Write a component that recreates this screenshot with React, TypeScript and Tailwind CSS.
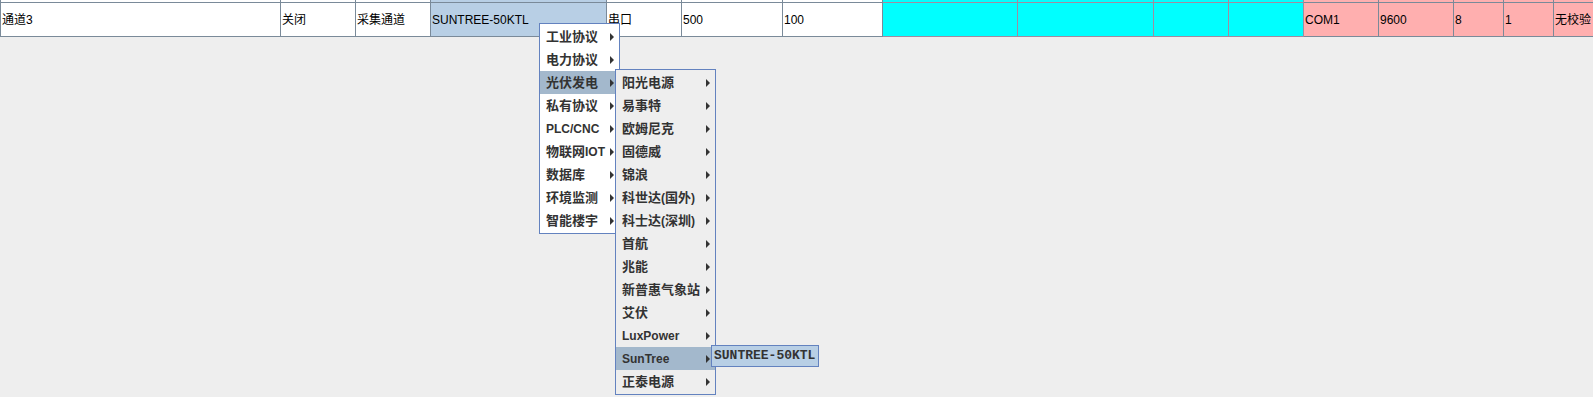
import React from "react";

type Cell = { w: number; text?: string; bg: string; line: string; first?: boolean };

const WHITE = "bg-white";
const SEL = "bg-[#b8cfe5]";
const CYAN = "bg-[#00ffff]";
const PINK = "bg-[#ffafaf]";

const cells: Cell[] = [
  { w: 281, text: "通道3", bg: WHITE, line: "border-[#7a8a99]", first: true },
  { w: 75, text: "关闭", bg: WHITE, line: "border-[#7a8a99]" },
  { w: 75, text: "采集通道", bg: WHITE, line: "border-[#7a8a99]" },
  { w: 176, text: "SUNTREE-50KTL", bg: SEL, line: "border-[#7a8a99]" },
  { w: 75, text: "串口", bg: WHITE, line: "border-[#7a8a99]" },
  { w: 101, text: "500", bg: WHITE, line: "border-[#7a8a99]" },
  { w: 100, text: "100", bg: WHITE, line: "border-[#7a8a99]" },
  { w: 135, bg: CYAN, line: "border-[#a08ca0]" },
  { w: 136, bg: CYAN, line: "border-[#a08ca0]" },
  { w: 75, bg: CYAN, line: "border-[#a08ca0]" },
  { w: 75, bg: CYAN, line: "border-[#a08ca0]" },
  { w: 75, text: "COM1", bg: PINK, line: "border-[#7a8a99]" },
  { w: 75, text: "9600", bg: PINK, line: "border-[#7a8a99]" },
  { w: 50, text: "8", bg: PINK, line: "border-[#7a8a99]" },
  { w: 50, text: "1", bg: PINK, line: "border-[#7a8a99]" },
  { w: 60, text: "无校验", bg: PINK, line: "border-[#7a8a99]" },
];

const menu1 = ["工业协议", "电力协议", "光伏发电", "私有协议", "PLC/CNC", "物联网IOT", "数据库", "环境监测", "智能楼宇"];
const menu2 = [
  "阳光电源", "易事特", "欧姆尼克", "固德威", "锦浪", "科世达(国外)", "科士达(深圳)",
  "首航", "兆能", "新普惠气象站", "艾伏", "LuxPower", "SunTree", "正泰电源",
];

function Arrow() {
  return <span className="h-0 w-0 shrink-0 border-y-[4px] border-l-[4px] border-y-transparent border-l-[#333333]" />;
}

// chinese glyphs run a little larger than the latin ones in the menus
function Label({ text }: { text: string }) {
  const parts = text.match(/[\u4e00-\u9fff]+|[^\u4e00-\u9fff]+/g) || [];
  return (
    <span>
      {parts.map((p, i) =>
        /[\u4e00-\u9fff]/.test(p) ? (
          <span key={i} className="text-[13px]">{p}</span>
        ) : (
          <span key={i} className="text-[12px]">{p}</span>
        )
      )}
    </span>
  );
}

function MenuItem({ label, active }: { label: string; active?: boolean }) {
  return (
    <div
      className={`flex h-[23px] items-center justify-between pl-[6px] pr-[5px] font-bold text-[#333333] whitespace-nowrap ${
        active ? "bg-[#a3b8cc]" : ""
      }`}
    >
      <Label text={label} />
      <Arrow />
    </div>
  );
}

export default function App() {
  return (
    <div
      className="relative h-[397px] w-[1593px] overflow-hidden bg-[#eeeeee] text-[12px] text-black"
      style={{ fontFamily: '"Liberation Sans", "Noto Sans CJK SC", sans-serif' }}
    >
      {/* clipped previous row */}
      <div className="flex h-[2px]">
        {cells.map((c, i) => (
          <div
            key={i}
            className={`shrink-0 border-r ${c.first ? "border-l" : ""} ${c.line} ${c.bg}`}
            style={{ width: c.w }}
          />
        ))}
      </div>
      {/* current row */}
      <div className="flex h-[35px]">
        {cells.map((c, i) => (
          <div
            key={i}
            className={`flex shrink-0 items-center overflow-hidden whitespace-nowrap border-y border-r pl-[1px] ${
              c.first ? "border-l" : ""
            } ${c.line} ${c.bg}`}
            style={{ width: c.w }}
          >
            {c.text}
          </div>
        ))}
      </div>

      {/* popup menus */}
      <div className="absolute left-[539px] top-[23px] w-[81px] border border-[#6382bf] bg-white py-[1px]">
        {menu1.map((m, i) => (
          <MenuItem key={m} label={m} active={i === 2} />
        ))}
      </div>
      <div className="absolute left-[615px] top-[69px] w-[101px] border border-[#6382bf] bg-[#eeeeee] py-[1px]">
        {menu2.map((m) => (
          <MenuItem key={m} label={m} active={m === "SunTree"} />
        ))}
      </div>
      <div className="absolute left-[711px] top-[345px] flex h-[22px] w-[108px] items-center border border-[#6382bf] bg-[#b8cfe5] pl-[2px]">
        <span
          className="text-[13px] font-bold text-[#333333]"
          style={{ fontFamily: '"Liberation Mono", monospace' }}
        >
          SUNTREE-50KTL
        </span>
      </div>
    </div>
  );
}
